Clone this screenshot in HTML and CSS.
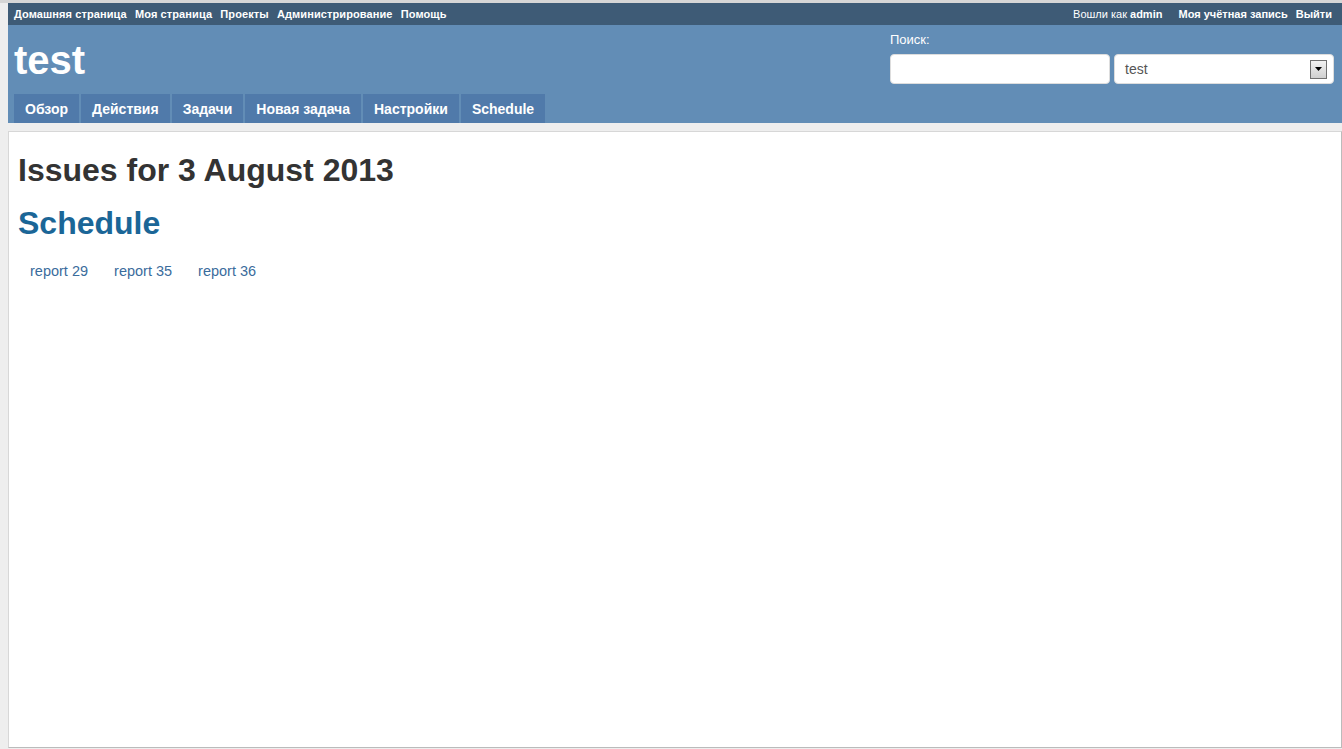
FILE: index.html
```html
<!DOCTYPE html>
<html>
<head>
    <title>Schedule - test</title>
    <link rel="stylesheet" href="styles.css">
</head>
<body>
    <div class="wrapper">
        <div class="top-menu">
            <div class="top-left">
                <a href="#">Домашняя страница</a>
                <a href="#">Моя страница</a>
                <a href="#">Проекты</a>
                <a href="#">Администрирование</a>
                <a href="#">Помощь</a>
            </div>
            <div class="top-right">
                <span class="logged">Вошли как <b>admin</b></span>
                <a href="#">Моя учётная запись</a>
                <a href="#">Выйти</a>
            </div>
        </div>

        <div class="header">
            <div class="header-row">
                <h1>test</h1>
                <div class="quick-search">
                    <label>Поиск:</label>
                    <div class="search-fields">
                        <input type="text" class="search-input">
                        <div class="project-select">
                            <span>test</span>
                            <span class="select-arrow">
                                <svg width="7" height="4" viewBox="0 0 7 4"><path d="M0 0h7L3.5 4z" fill="#000"/></svg>
                            </span>
                        </div>
                    </div>
                </div>
            </div>
            <div class="main-menu">
                <a href="#">Обзор</a>
                <a href="#">Действия</a>
                <a href="#">Задачи</a>
                <a href="#">Новая задача</a>
                <a href="#">Настройки</a>
                <a href="#">Schedule</a>
            </div>
        </div>

        <div class="content">
            <h2>Issues for 3 August 2013</h2>
            <h3>Schedule</h3>
            <div class="reports">
                <a href="#">report 29</a>
                <a href="#">report 35</a>
                <a href="#">report 36</a>
            </div>
        </div>
    </div>
</body>
</html>
```

FILE: styles.css
```css
html, body {
    height: 100%;
}

body {
    margin: 0;
    padding: 0;
    background-color: #eeeeee;
    font-family: "Liberation Sans", Arial, sans-serif;
    font-size: 12px;
    border-top: 3px solid #d6d6d6;
    box-sizing: border-box;
}

.wrapper {
    margin-left: 8px;
    height: 100%;
    display: flex;
    flex-direction: column;
}

a {
    text-decoration: none;
}

.top-menu {
    background-color: #3e5b76;
    color: #fff;
    height: 22px;
    display: flex;
    justify-content: space-between;
    align-items: center;
    font-size: 11px;
    font-weight: bold;
    padding: 0 10px 0 6px;
}

.top-left {
    letter-spacing: 0.1px;
}

.top-menu a {
    color: #fff;
    margin-right: 5px;
}

.top-right a {
    margin-right: 0;
    margin-left: 5px;
}

.top-right .logged {
    font-weight: normal;
    margin-right: 8px;
}

.top-right .logged b {
    font-weight: bold;
}

.header {
    background-color: #628db6;
    color: #fff;
    height: 98px;
    display: flex;
    flex-direction: column;
    justify-content: space-between;
}

.header-row {
    display: flex;
    justify-content: space-between;
    padding: 0 8px 0 6px;
}

.header h1 {
    margin: 14px 0 0 0;
    font-size: 40px;
    font-weight: bold;
    line-height: 42px;
}

.quick-search {
    margin-top: 7px;
}

.quick-search label {
    display: block;
    font-size: 13px;
    height: 15px;
    margin-bottom: 7px;
}

.search-fields {
    display: flex;
    gap: 4px;
}

.search-input {
    width: 220px;
    height: 30px;
    box-sizing: border-box;
    border: 1px solid #dddddd;
    border-radius: 4px;
    background: #fff;
    padding: 0 6px;
}

.project-select {
    width: 220px;
    height: 30px;
    box-sizing: border-box;
    border: 1px solid #dddddd;
    border-radius: 4px;
    background: #fff;
    color: #555;
    font-size: 14px;
    display: flex;
    align-items: center;
    justify-content: space-between;
    padding: 0 6px 0 10px;
}

.select-arrow {
    width: 15px;
    height: 17px;
    border: 1px solid #707070;
    background: linear-gradient(#f2f2f2, #cfcfcf);
    display: flex;
    align-items: center;
    justify-content: center;
}

.main-menu {
    display: flex;
    gap: 2px;
    padding-left: 6px;
}

.main-menu a {
    background-color: #507aaa;
    color: #fff;
    font-size: 14px;
    font-weight: bold;
    height: 29px;
    line-height: 31px;
    padding: 0 11px 0 11px;
    box-sizing: border-box;
}

.content {
    flex: 1;
    margin-top: 8px;
    margin-bottom: 1px;
    background-color: #fff;
    border: 1px solid #d7d7d7;
    border-bottom-color: #bbbbbb;
    border-right-color: #bbbbbb;
    padding: 0 9px;
}

.content h2 {
    color: #333;
    font-size: 32px;
    font-weight: bold;
    margin: 20px 0 0 0;
    line-height: 36px;
}

.content h3 {
    color: #1b6697;
    font-size: 32px;
    font-weight: bold;
    margin: 17px 0 0 0;
    line-height: 36px;
}

.reports {
    display: flex;
    gap: 26px;
    padding-left: 12px;
    margin-top: 22px;
}

.reports a {
    color: #3a6c9c;
    font-size: 14.5px;
}
```
